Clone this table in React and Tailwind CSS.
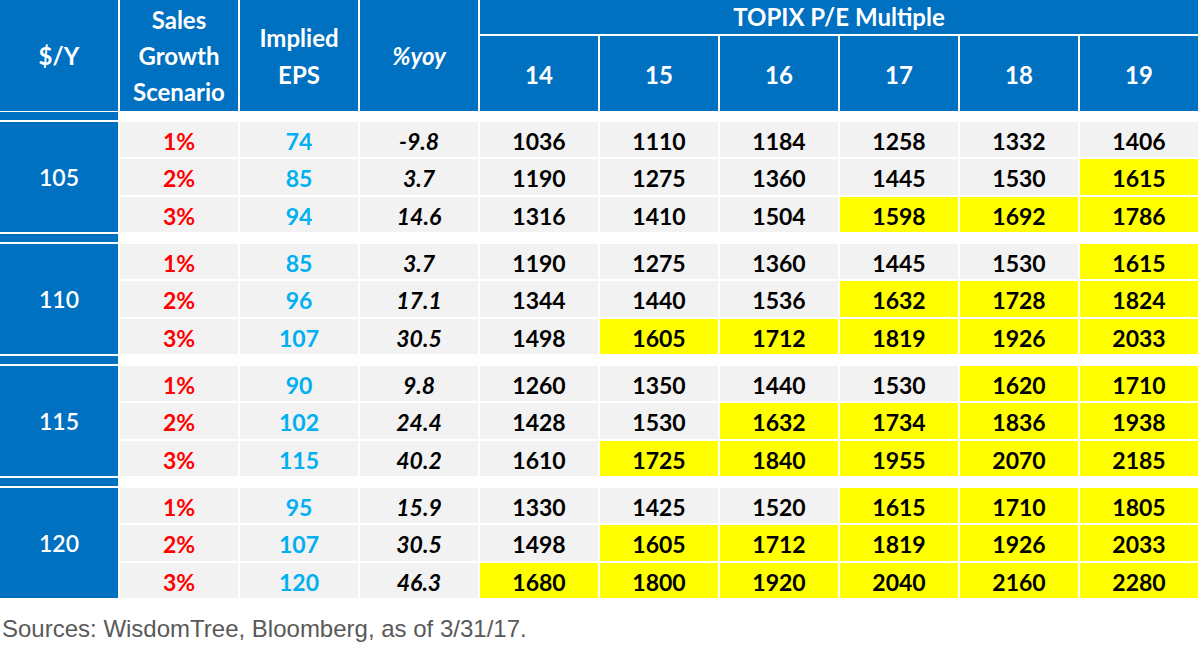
import React from 'react';

const groups = [
  {
    fx: 105,
    rows: [
      ['1%', 74, '-9.8', [1036, 1110, 1184, 1258, 1332, 1406], 6],
      ['2%', 85, '3.7', [1190, 1275, 1360, 1445, 1530, 1615], 5],
      ['3%', 94, '14.6', [1316, 1410, 1504, 1598, 1692, 1786], 3],
    ],
  },
  {
    fx: 110,
    rows: [
      ['1%', 85, '3.7', [1190, 1275, 1360, 1445, 1530, 1615], 5],
      ['2%', 96, '17.1', [1344, 1440, 1536, 1632, 1728, 1824], 3],
      ['3%', 107, '30.5', [1498, 1605, 1712, 1819, 1926, 2033], 1],
    ],
  },
  {
    fx: 115,
    rows: [
      ['1%', 90, '9.8', [1260, 1350, 1440, 1530, 1620, 1710], 4],
      ['2%', 102, '24.4', [1428, 1530, 1632, 1734, 1836, 1938], 2],
      ['3%', 115, '40.2', [1610, 1725, 1840, 1955, 2070, 2185], 1],
    ],
  },
  {
    fx: 120,
    rows: [
      ['1%', 95, '15.9', [1330, 1425, 1520, 1615, 1710, 1805], 3],
      ['2%', 107, '30.5', [1498, 1605, 1712, 1819, 1926, 2033], 1],
      ['3%', 120, '46.3', [1680, 1800, 1920, 2040, 2160, 2280], 0],
    ],
  },
];

const multiples = [14, 15, 16, 17, 18, 19];

const HeadCell = ({ children, className = '' }) => (
  <div className={`w-[118px] bg-[#0070c0] text-white font-bold text-[24px] flex items-center justify-center text-center ${className}`}>
    {children}
  </div>
);

const Cell = ({ children, className = '' }) => (
  <div className={`w-[118px] flex items-center justify-center pt-[3px] ${className}`}>{children}</div>
);

const Separator = ({ first }) => (
  <div className={first ? 'h-[11px] pt-[1px]' : 'h-[12px] pt-[2px]'}>
    <div className="w-[118px] h-[8px] bg-[#0070c0]" />
  </div>
);

export default function App() {
  return (
    <div className="w-[1200px] h-[647px] bg-white overflow-hidden font-['Lato',sans-serif] text-[23px]">
      <div className="flex gap-[2px] h-[111px]">
        <HeadCell>$/Y</HeadCell>
        <HeadCell className="leading-[36px]">
          Sales
          <br />
          Growth
          <br />
          Scenario
        </HeadCell>
        <HeadCell className="leading-[37px]">
          Implied
          <br />
          EPS
        </HeadCell>
        <HeadCell className="italic">%yoy</HeadCell>
        <div className="w-[718px] flex flex-col gap-[2px]">
          <div className="h-[34px] bg-[#0070c0] text-white font-bold text-[24px] flex items-center justify-center">
            TOPIX P/E Multiple
          </div>
          <div className="flex-1 flex gap-[2px]">
            {multiples.map((m) => (
              <HeadCell key={m} className="pt-[2px]">
                {m}
              </HeadCell>
            ))}
          </div>
        </div>
      </div>

      {groups.map((g, gi) => (
        <React.Fragment key={g.fx}>
          <Separator first={gi === 0} />
          <div className="flex gap-[2px] h-[110px]">
            <div className="w-[118px] bg-[#0070c0] text-white font-semibold flex items-center justify-center">
              {g.fx}
            </div>
            <div className="grid grid-rows-3 gap-y-[2px]">
              {g.rows.map(([pct, eps, yoy, vals, hl]) => (
                <div key={pct} className="flex gap-[2px] font-bold">
                  <Cell className="bg-[#f2f2f2] text-[#ff0000]">{pct}</Cell>
                  <Cell className="bg-[#f2f2f2] text-[#00b0f0]">{eps}</Cell>
                  <Cell className="bg-[#f2f2f2] text-black italic">{yoy}</Cell>
                  {vals.map((v, i) => (
                    <Cell key={i} className={i >= hl ? 'bg-[#ffff00] text-black' : 'bg-[#f2f2f2] text-black'}>
                      {v}
                    </Cell>
                  ))}
                </div>
              ))}
            </div>
          </div>
        </React.Fragment>
      ))}

      <p className="mt-[18px] pl-[2px] font-['Liberation_Sans',Arial,sans-serif] text-[24px] leading-[26px] text-[#595959]">
        Sources: WisdomTree, Bloomberg, as of 3/31/17.
      </p>
    </div>
  );
}
